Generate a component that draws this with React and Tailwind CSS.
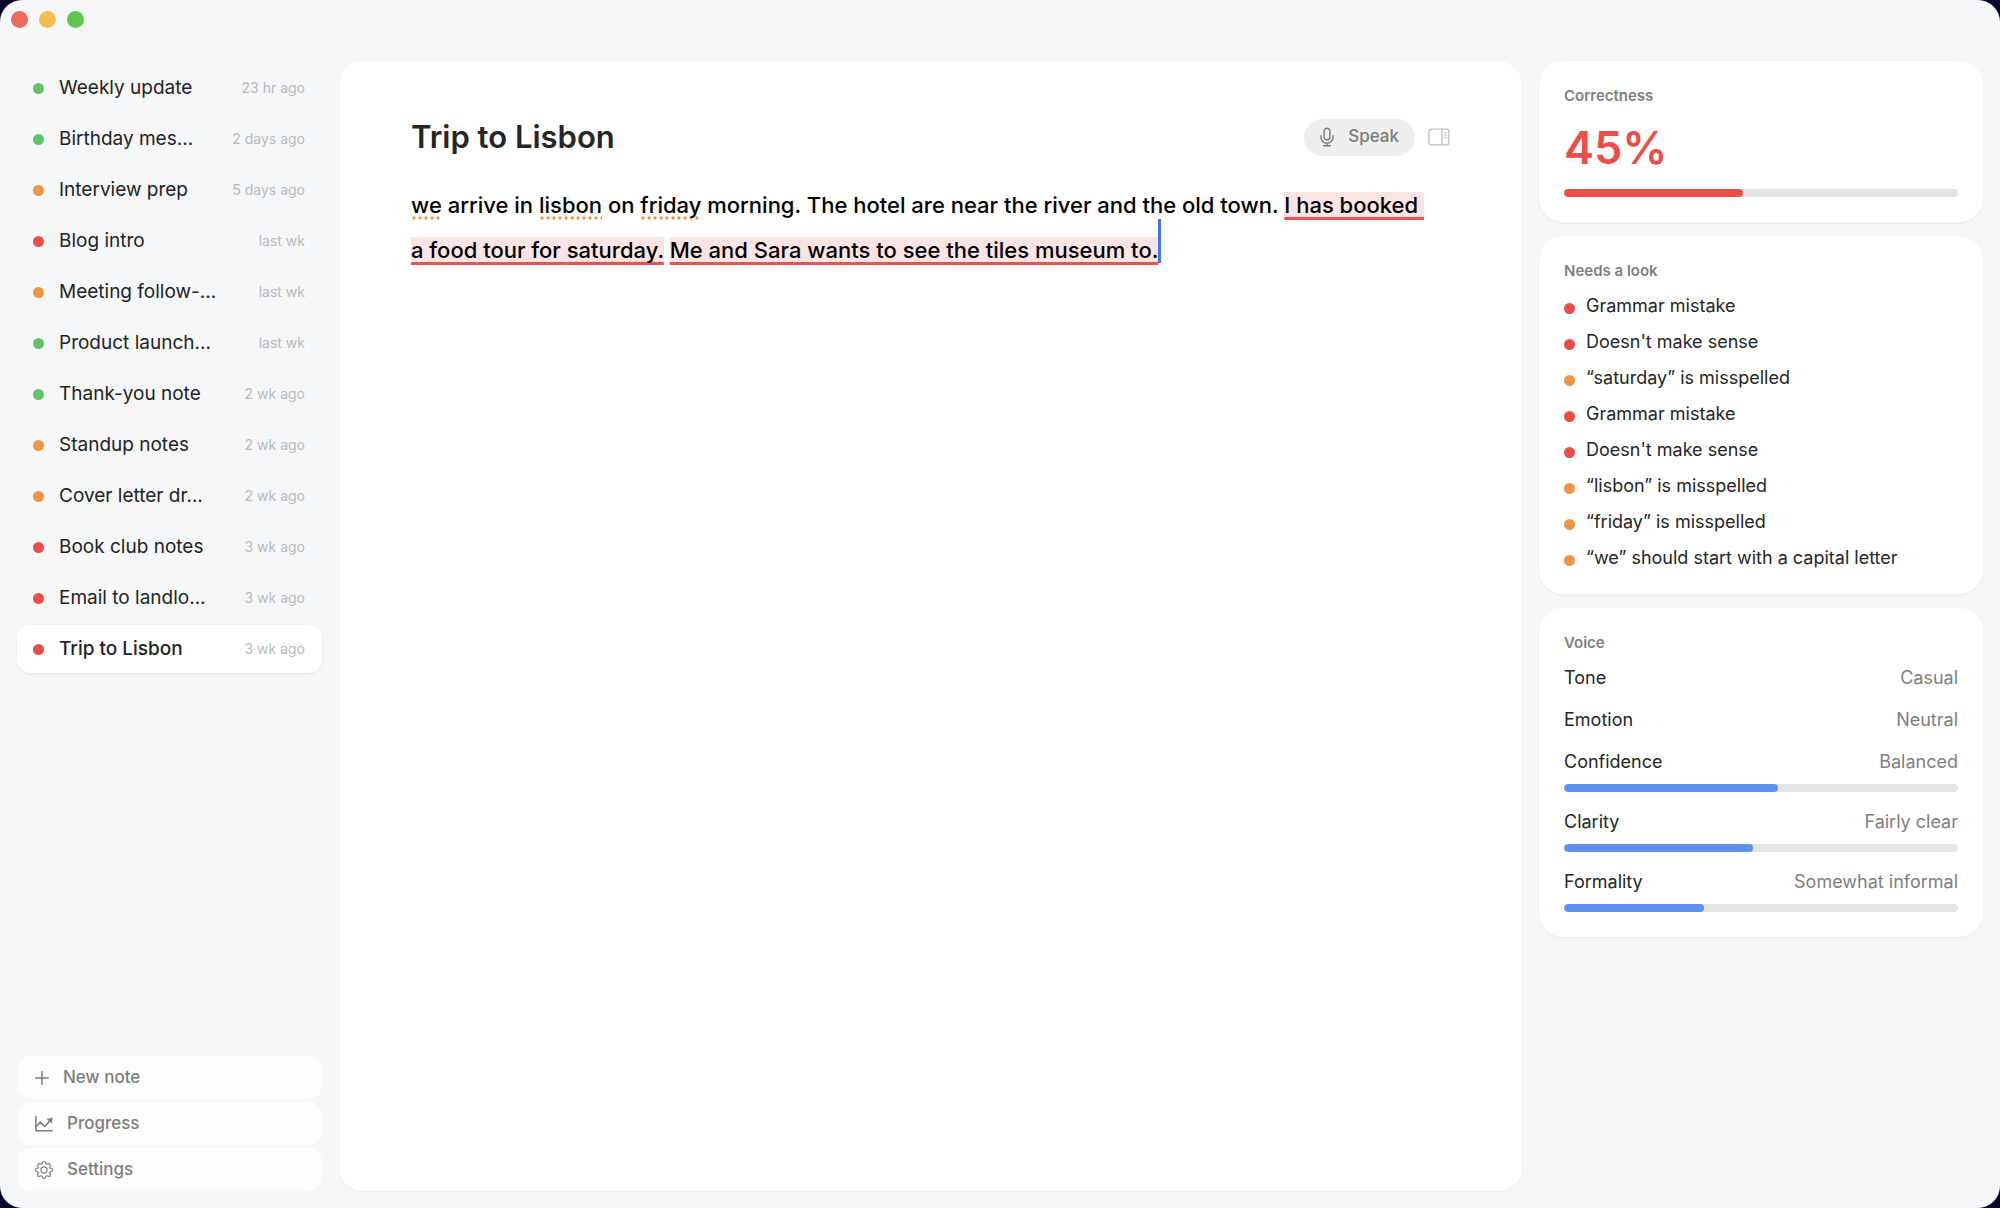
import React, { useState } from "react";
import clsx from "clsx";
import { BsGear } from "react-icons/bs";

const NOTES = [
  { title: "Weekly update", time: "23 hr ago", status: "good" },
  { title: "Birthday mes...", time: "2 days ago", status: "good" },
  { title: "Interview prep", time: "5 days ago", status: "warn" },
  { title: "Blog intro", time: "last wk", status: "bad" },
  { title: "Meeting follow-...", time: "last wk", status: "warn" },
  { title: "Product launch...", time: "last wk", status: "good" },
  { title: "Thank-you note", time: "2 wk ago", status: "good" },
  { title: "Standup notes", time: "2 wk ago", status: "warn" },
  { title: "Cover letter dr...", time: "2 wk ago", status: "warn" },
  { title: "Book club notes", time: "3 wk ago", status: "bad" },
  { title: "Email to landlo...", time: "3 wk ago", status: "bad" },
  { title: "Trip to Lisbon", time: "3 wk ago", status: "bad" },
];

const ISSUES = [
  { text: "Grammar mistake", status: "bad" },
  { text: "Doesn't make sense", status: "bad" },
  { text: "“saturday” is misspelled", status: "warn" },
  { text: "Grammar mistake", status: "bad" },
  { text: "Doesn't make sense", status: "bad" },
  { text: "“lisbon” is misspelled", status: "warn" },
  { text: "“friday” is misspelled", status: "warn" },
  { text: "“we” should start with a capital letter", status: "warn" },
];

const VOICE = [
  { name: "Tone", value: "Casual" },
  { name: "Emotion", value: "Neutral" },
  { name: "Confidence", value: "Balanced", level: 54.4 },
  { name: "Clarity", value: "Fairly clear", level: 48 },
  { name: "Formality", value: "Somewhat informal", level: 35.6 },
];

const DOT_COLORS = {
  good: "bg-[#62c467]",
  warn: "bg-[#ee9546]",
  bad: "bg-[#e94e49]",
};

function Dot({ status, className }) {
  return (
    <span
      className={clsx("w-[11px] h-[11px] rounded-full shrink-0", DOT_COLORS[status], className)}
    />
  );
}

function PlusIcon() {
  return (
    <svg className="w-[14px] h-[14px]" viewBox="0 0 14 14" fill="none" stroke="currentColor" strokeWidth="1.5" strokeLinecap="round" aria-hidden="true">
      <path d="M7 .8v12.4M.8 7h12.4" />
    </svg>
  );
}

function ChartIcon() {
  return (
    <svg className="w-[18px] h-[18px]" viewBox="0 0 18 18" fill="none" stroke="currentColor" strokeWidth="1.5" strokeLinecap="round" strokeLinejoin="round" aria-hidden="true">
      <path d="M.9 1.6v14.2h16.3" />
      <path d="M1.6 11.2l3.6-4.1 4.6 4.4 4.8-5.6" />
      <path d="M12.3 4.2l5-1.3-.7 5z" fill="currentColor" strokeWidth=".6" />
    </svg>
  );
}

function MicIcon() {
  return (
    <svg className="w-[14px] h-5" viewBox="0 0 14 20" fill="none" stroke="currentColor" strokeWidth="1.4" strokeLinecap="round" aria-hidden="true">
      <rect x="4.1" y="1.2" width="5.8" height="11.6" rx="2.9" />
      <path d="M1 8.8v1.4a6 6 0 0 0 12 0V8.8M7 16.2v2.6M3.6 18.8h6.8" />
    </svg>
  );
}

function PanelIcon() {
  return (
    <svg className="w-[22px] h-[18px]" viewBox="0 0 22 18" fill="none" stroke="currentColor" strokeWidth="1.3" strokeLinecap="round" aria-hidden="true">
      <rect x=".9" y="1.2" width="20" height="15.6" rx="2.6" />
      <path d="M14 1.2v15.6" />
      <path d="M16.6 4.7h1.8M16.6 7.1h1.8M16.6 9.5h1.8" strokeWidth="1" />
    </svg>
  );
}

function Misspelled({ children }) {
  return (
    <span className="pb-0.5 bg-[radial-gradient(circle,#e8944c_1.3px,transparent_1.9px)] bg-[length:6px_4px] bg-repeat-x bg-bottom-left">
      {children}
    </span>
  );
}

function Flagged({ children }) {
  return (
    <span className="bg-[#fae4e4] underline decoration-[#e9524e] decoration-3 underline-offset-4 [text-decoration-skip-ink:none]">
      {children}
    </span>
  );
}

function Bar({ value, label, color }) {
  return (
    <div
      role="progressbar"
      aria-label={label}
      aria-valuenow={value}
      className="h-2 rounded-full bg-[#e4e4e4] overflow-hidden"
    >
      <div className={clsx("h-full rounded-full", color)} style={{ width: `${value}%` }} />
    </div>
  );
}

function Card({ title, children }) {
  return (
    <section className="bg-white rounded-[24px] p-[25px] shadow-[0_1px_3px_rgba(0,0,0,0.06)]">
      <h2 className="text-[15px] leading-5 font-semibold text-[#808080]">{title}</h2>
      {children}
    </section>
  );
}

function Sidebar({ selected, onSelect }) {
  return (
    <aside className="w-[305px] shrink-0 flex flex-col justify-between">
      <nav className="flex flex-col gap-[3px] pt-[3px]">
        {NOTES.map((note) => (
          <button
            key={note.title}
            onClick={() => onSelect(note.title)}
            className={clsx(
              "h-12 pl-4 pr-[17px] rounded-[14px] flex items-center text-left",
              note.title === selected && "bg-white shadow-[0_1px_3px_rgba(0,0,0,0.07)]"
            )}
          >
            <Dot status={note.status} />
            <span
              className={clsx(
                "ml-[15px] flex-1 text-[19px] text-[#232323] whitespace-nowrap",
                note.title === selected && "font-medium"
              )}
            >
              {note.title}
            </span>
            <span className="text-sm text-[#b9babc]">{note.time}</span>
          </button>
        ))}
      </nav>

      <div className="flex flex-col gap-[3px] text-[17px] font-medium text-[#7d7d7d]">
        <button className="h-[43px] px-[18px] rounded-[14px] bg-white/80 flex items-center gap-[14px]">
          <PlusIcon />
          New note
        </button>
        <button className="h-[43px] px-[18px] rounded-[14px] bg-white/80 flex items-center gap-[14px]">
          <ChartIcon />
          Progress
        </button>
        <button className="h-[43px] px-[18px] rounded-[14px] bg-white/80 flex items-center gap-[14px]">
          <BsGear className="w-[18px] h-[18px]" aria-hidden="true" />
          Settings
        </button>
      </div>
    </aside>
  );
}

function Editor({ onTogglePanel }) {
  return (
    <main className="flex-1 min-w-0 bg-white rounded-[24px] px-[72px] pt-14 shadow-[0_1px_3px_rgba(0,0,0,0.05)]">
      <div className="flex items-center justify-between">
        <h1 className="text-[31px] leading-10 font-semibold text-[#262626]">Trip to Lisbon</h1>
        <div className="flex items-center gap-[13px]">
          <button className="h-[37px] px-4 rounded-full bg-[#eeeeee] text-[#7d7d7d] text-[17px] font-medium flex items-center gap-[14px]">
            <MicIcon />
            Speak
          </button>
          <button onClick={onTogglePanel} aria-label="Toggle side panel" className="text-[#bdbdbd]">
            <PanelIcon />
          </button>
        </div>
      </div>

      <div
        role="textbox"
        aria-multiline="true"
        aria-label="Note text"
        className="mt-[26px] pr-4 text-[22px] leading-[45px] font-medium text-black whitespace-pre-wrap"
      >
        <Misspelled>we</Misspelled>
        <span> arrive in </span>
        <Misspelled>lisbon</Misspelled>
        <span> on </span>
        <Misspelled>friday</Misspelled>
        <span> morning. The hotel are near the river and the old town. </span>
        <Flagged>
          I has booked a food tour for <Misspelled>saturday</Misspelled>.
        </Flagged>
        <span> </span>
        <Flagged>Me and Sara wants to see the tiles museum to.</Flagged>
        <span className="relative">
          <span className="absolute left-0 bottom-0 w-[3px] h-11 bg-[#3f74ea]" />
        </span>
      </div>
    </main>
  );
}

function Insights() {
  return (
    <aside className="w-[444px] shrink-0 flex flex-col gap-[14px]">
      <Card title="Correctness">
        <p className="mt-[17px] mb-4 text-[45px] leading-[50px] font-semibold text-[#e94e49]">45%</p>
        <Bar value={45.4} label="Correctness" color="bg-[#e94e49]" />
      </Card>

      <Card title="Needs a look">
        <ul className="mt-[14px] flex flex-col gap-[14px]">
          {ISSUES.map((issue, i) => (
            <li key={i} className="flex items-start gap-[11px] text-lg leading-[22px] text-[#262626]">
              <Dot status={issue.status} className="mt-2" />
              {issue.text}
            </li>
          ))}
        </ul>
      </Card>

      <Card title="Voice">
        <div className="mt-[13px] flex flex-col gap-[18px]">
          {VOICE.map((item) => (
            <div key={item.name} className="flex flex-col gap-[10px]">
              <div className="flex justify-between text-lg leading-6">
                <span className="text-[#262626]">{item.name}</span>
                <span className="text-[#808080]">{item.value}</span>
              </div>
              {item.level && <Bar value={item.level} label={item.name} color="bg-[#5f90ee]" />}
            </div>
          ))}
        </div>
      </Card>
    </aside>
  );
}

export default function App() {
  const [selected, setSelected] = useState("Trip to Lisbon");
  const [panelOpen, setPanelOpen] = useState(true);

  return (
    <div className="bg-[#07052e] font-['Inter',sans-serif]">
      <div className="min-h-screen bg-[#f5f7f9] rounded-[22px] flex flex-col">
        {/* Window controls */}
        <header className="h-[61px] px-[11px] pt-[11px] flex items-start gap-[11px]">
          <button aria-label="Close" className="w-[17px] h-[17px] rounded-full bg-[#ec6a5e]" />
          <button aria-label="Minimize" className="w-[17px] h-[17px] rounded-full bg-[#f5bf4f]" />
          <button aria-label="Zoom" className="w-[17px] h-[17px] rounded-full bg-[#61c554]" />
        </header>

        <div className="flex-1 flex gap-[17px] px-[17px] pb-[17px]">
          <Sidebar selected={selected} onSelect={setSelected} />
          <Editor onTogglePanel={() => setPanelOpen((v) => !v)} />
          {panelOpen && <Insights />}
        </div>
      </div>
    </div>
  );
}
